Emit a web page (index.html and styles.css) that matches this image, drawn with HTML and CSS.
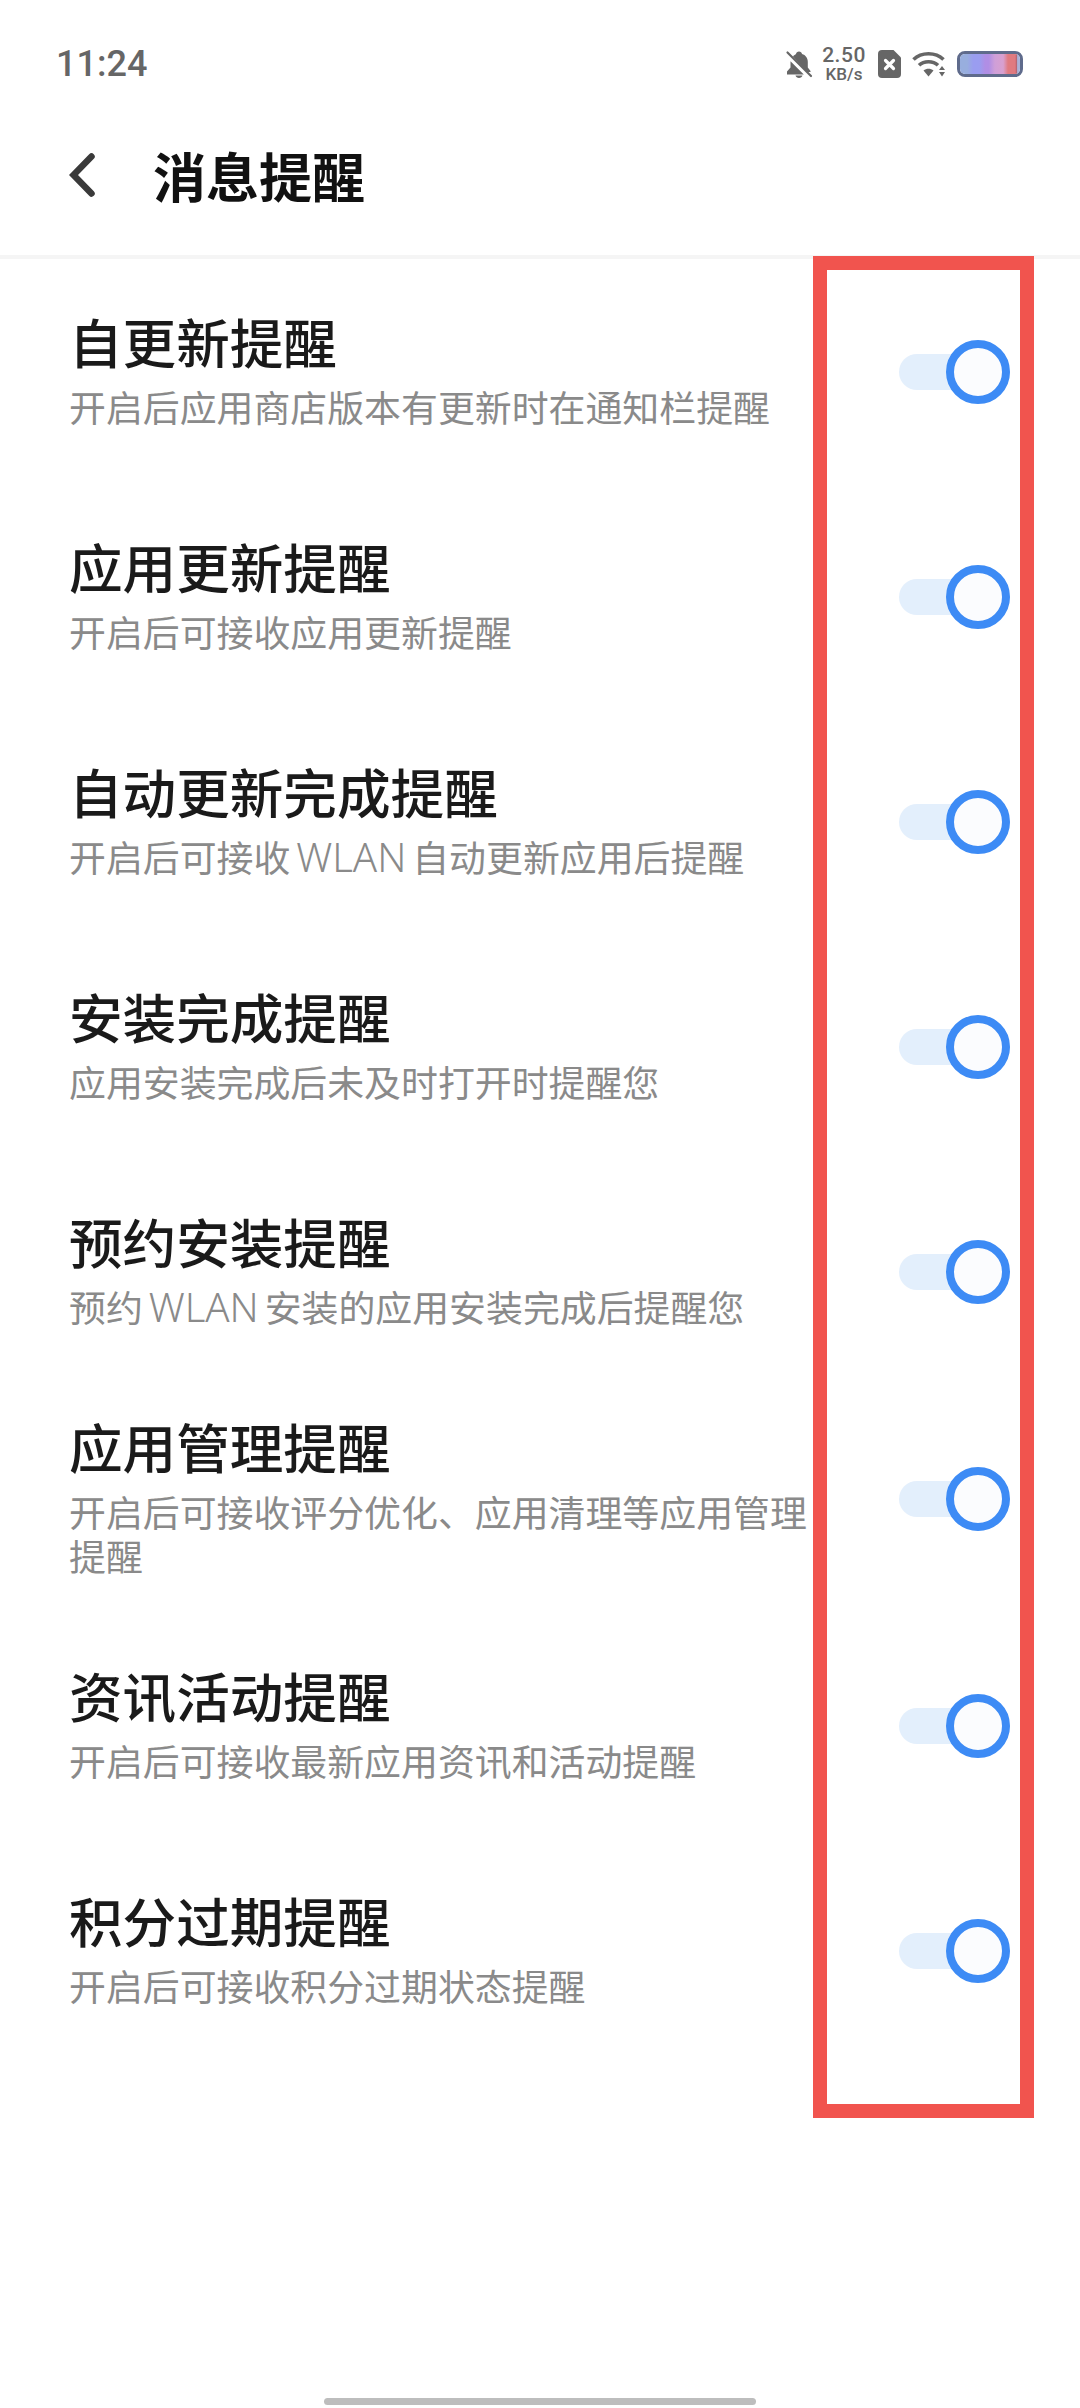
FILE: index.html
```html
<!DOCTYPE html>
<html lang="zh-CN">
<head>
    <meta charset="utf-8">
    <meta name="viewport" content="width=device-width, initial-scale=1.0">
    <title>消息提醒</title>
    <link rel="stylesheet" href="styles.css">
</head>
<body>
    <!--status bar-->
    <div class="statusBar">
        <span class="time">11:24</span>
        <div class="statusIcons">
            <svg class="bell" width="28" height="28" viewBox="0 0 28 28">
                <path fill="#666" d="M14 1.500c1.600 0 2.800 1.100 3 2.500 3.600 1 5.800 4 5.800 8v5.500l2.700 3.500v1H22L8 6.500C9 5.200 10.300 4.400 11 4c.2-1.400 1.400-2.500 3-2.500zM5.500 11.200 18.800 24.500H2V21.500l3.500-4v-5c0-.5 0-.9 0-1.300zM10.500 25.500h7c-.4 1.500-1.800 2.500-3.500 2.500s-3.100-1-3.500-2.500z"/>
                <path stroke="#666" stroke-width="2.200" stroke-linecap="round" d="M2.500 2.500 26 26"/>
            </svg>
            <div class="speed">
                <span class="speedNum">2.50</span>
                <span class="speedUnit">KB/s</span>
            </div>
            <svg class="sim" width="23" height="28" viewBox="0 0 23 28">
                <path fill="#666" d="M4 0h11.500L23 7.500V24a4 4 0 0 1-4 4H4a4 4 0 0 1-4-4V4a4 4 0 0 1 4-4z"/>
                <path stroke="#fff" stroke-width="3.200" stroke-linecap="round" d="M7.500 10.500l8 8M15.500 10.500l-8 8"/>
            </svg>
            <svg class="wifi" width="33" height="26" viewBox="0 0 33 26">
                <path fill="none" stroke="#666" stroke-width="3.600" d="M1.500 8.500C9.500 .8 23.500 .8 31.500 8.500"/>
                <path fill="none" stroke="#666" stroke-width="3.600" d="M7 14.200C12 9.500 21 9.500 26 14.200"/>
                <path fill="#666" d="M11.500 19.500c3-2.300 7-2.300 10 0L16.500 25.500z"/>
                <path fill="#666" d="M30 15l3 4h-6zM27 21h6l-3 4.500z"/>
            </svg>
            <div class="battery"><div class="batteryFill"></div></div>
        </div>
    </div>
    <!--nav-->
    <div class="navBar">
        <svg class="back" width="26" height="44" viewBox="0 0 26 44">
            <path fill="none" stroke="#3a3a3a" stroke-width="6.500" stroke-linecap="round" stroke-linejoin="miter" d="M22.500 3.500 4.500 22l18 18.500"/>
        </svg>
        <span class="navTitle">消息提醒</span>
    </div>
    <!--settings list-->
    <div class="list">
        <div class="row">
            <div class="rowText">
                <p class="rowTitle">自更新提醒</p>
                <p class="rowDesc">开启后应用商店版本有更新时在通知栏提醒</p>
            </div>
            <div class="switch"><div class="knob"></div></div>
        </div>
        <div class="row">
            <div class="rowText">
                <p class="rowTitle">应用更新提醒</p>
                <p class="rowDesc">开启后可接收应用更新提醒</p>
            </div>
            <div class="switch"><div class="knob"></div></div>
        </div>
        <div class="row">
            <div class="rowText">
                <p class="rowTitle">自动更新完成提醒</p>
                <p class="rowDesc">开启后可接收<span class="latin"> WLAN </span>自动更新应用后提醒</p>
            </div>
            <div class="switch"><div class="knob"></div></div>
        </div>
        <div class="row">
            <div class="rowText">
                <p class="rowTitle">安装完成提醒</p>
                <p class="rowDesc">应用安装完成后未及时打开时提醒您</p>
            </div>
            <div class="switch"><div class="knob"></div></div>
        </div>
        <div class="row">
            <div class="rowText">
                <p class="rowTitle">预约安装提醒</p>
                <p class="rowDesc">预约<span class="latin"> WLAN </span>安装的应用安装完成后提醒您</p>
            </div>
            <div class="switch"><div class="knob"></div></div>
        </div>
        <div class="row">
            <div class="rowText">
                <p class="rowTitle">应用管理提醒</p>
                <p class="rowDesc">开启后可接收评分优化、应用清理等应用管理提醒</p>
            </div>
            <div class="switch"><div class="knob"></div></div>
        </div>
        <div class="row">
            <div class="rowText">
                <p class="rowTitle">资讯活动提醒</p>
                <p class="rowDesc">开启后可接收最新应用资讯和活动提醒</p>
            </div>
            <div class="switch"><div class="knob"></div></div>
        </div>
        <div class="row">
            <div class="rowText">
                <p class="rowTitle">积分过期提醒</p>
                <p class="rowDesc">开启后可接收积分过期状态提醒</p>
            </div>
            <div class="switch"><div class="knob"></div></div>
        </div>
    </div>
    <div class="homeBar"></div>
    <!--red highlight frame over the switches-->
    <div class="highlight"></div>
</body>
</html>
```

FILE: styles.css
```css
* {
    box-sizing: border-box;
}
body {
    margin: 0;
    width: 1080px;
    height: 2408px;
    position: relative;
    display: flex;
    flex-direction: column;
    overflow: hidden;
    background-color: #ffffff;
    font-family: "Noto Sans CJK SC", "Noto Sans", sans-serif;
}
p {
    margin: 0;
}
.statusBar {
    height: 100px;
    padding: 38px 57px 0 56px;
    display: flex;
    justify-content: space-between;
    align-items: flex-start;
}
.time {
    font-family: Roboto, sans-serif;
    font-weight: 500;
    font-size: 36px;
    line-height: 52px;
    color: #666666;
}
.statusIcons {
    display: flex;
    align-items: center;
    height: 52px;
}
.bell {
    margin-right: 9px;
}
.speed {
    display: flex;
    flex-direction: column;
    align-items: center;
    width: 44px;
    margin-right: 12px;
    font-family: Roboto, sans-serif;
    font-weight: 500;
    color: #666666;
}
.speedNum {
    font-size: 21px;
    line-height: 20px;
    letter-spacing: 0.5px;
}
.speedUnit {
    font-size: 17px;
    line-height: 18px;
}
.sim {
    margin-right: 11px;
}
.wifi {
    margin-right: 12px;
}
.battery {
    width: 66px;
    height: 26px;
    border: 3px solid #5f6b8c;
    border-radius: 8px;
    overflow: hidden;
}
.batteryFill {
    height: 100%;
    background: linear-gradient(90deg, #98aede 0%, #98aede 12%, #9a9df0 22%, #9a9df0 32%, #b08ee5 42%, #b08ee5 48%, #cf9fd8 58%, #d8a0d0 72%, #e07a80 80%, #e07a80 92%, #b8606c 94%, #aab2d8 96%);
}
.navBar {
    height: 159px;
    padding: 0 0 6px 69px;
    display: flex;
    align-items: center;
    border-bottom: 4px solid #f5f5f5;
}
.back {
    margin-right: 58px;
}
.navTitle {
    font-size: 53px;
    font-weight: 700;
    color: #111111;
}
.list {
    flex: 1;
}
.row {
    min-height: 225px;
    padding: 30px 70px 30px 69px;
    display: flex;
    justify-content: space-between;
    align-items: center;
}
.rowText {
    width: 744px;
    padding-bottom: 6px;
}
.rowTitle {
    font-size: 53.6px;
    font-weight: 500;
    line-height: 64px;
    color: #1a1a1a;
}
.rowDesc {
    margin-top: 11px;
    font-size: 36.9px;
    line-height: 44px;
    color: #8a8a8a;
}
.latin {
    font-family: "Noto Sans", sans-serif;
    font-size: 40px;
    font-weight: 300;
    word-spacing: -4.500px;
}
.switch {
    width: 111px;
    height: 36px;
    position: relative;
    border-radius: 18px;
    background-color: #e3effc;
}
.knob {
    width: 64px;
    height: 64px;
    position: absolute;
    top: -14px;
    right: 0;
    border: 8px solid #3d8bf5;
    border-radius: 50%;
    background-color: #fbfcfe;
}
.homeBar {
    width: 432px;
    height: 7px;
    margin: 0 auto 3px auto;
    border-radius: 4px;
    background-color: #bdbdbd;
}
.highlight {
    position: absolute;
    top: 256px;
    left: 813px;
    width: 221px;
    height: 1862px;
    border: 14px solid #f1544e;
}
```
